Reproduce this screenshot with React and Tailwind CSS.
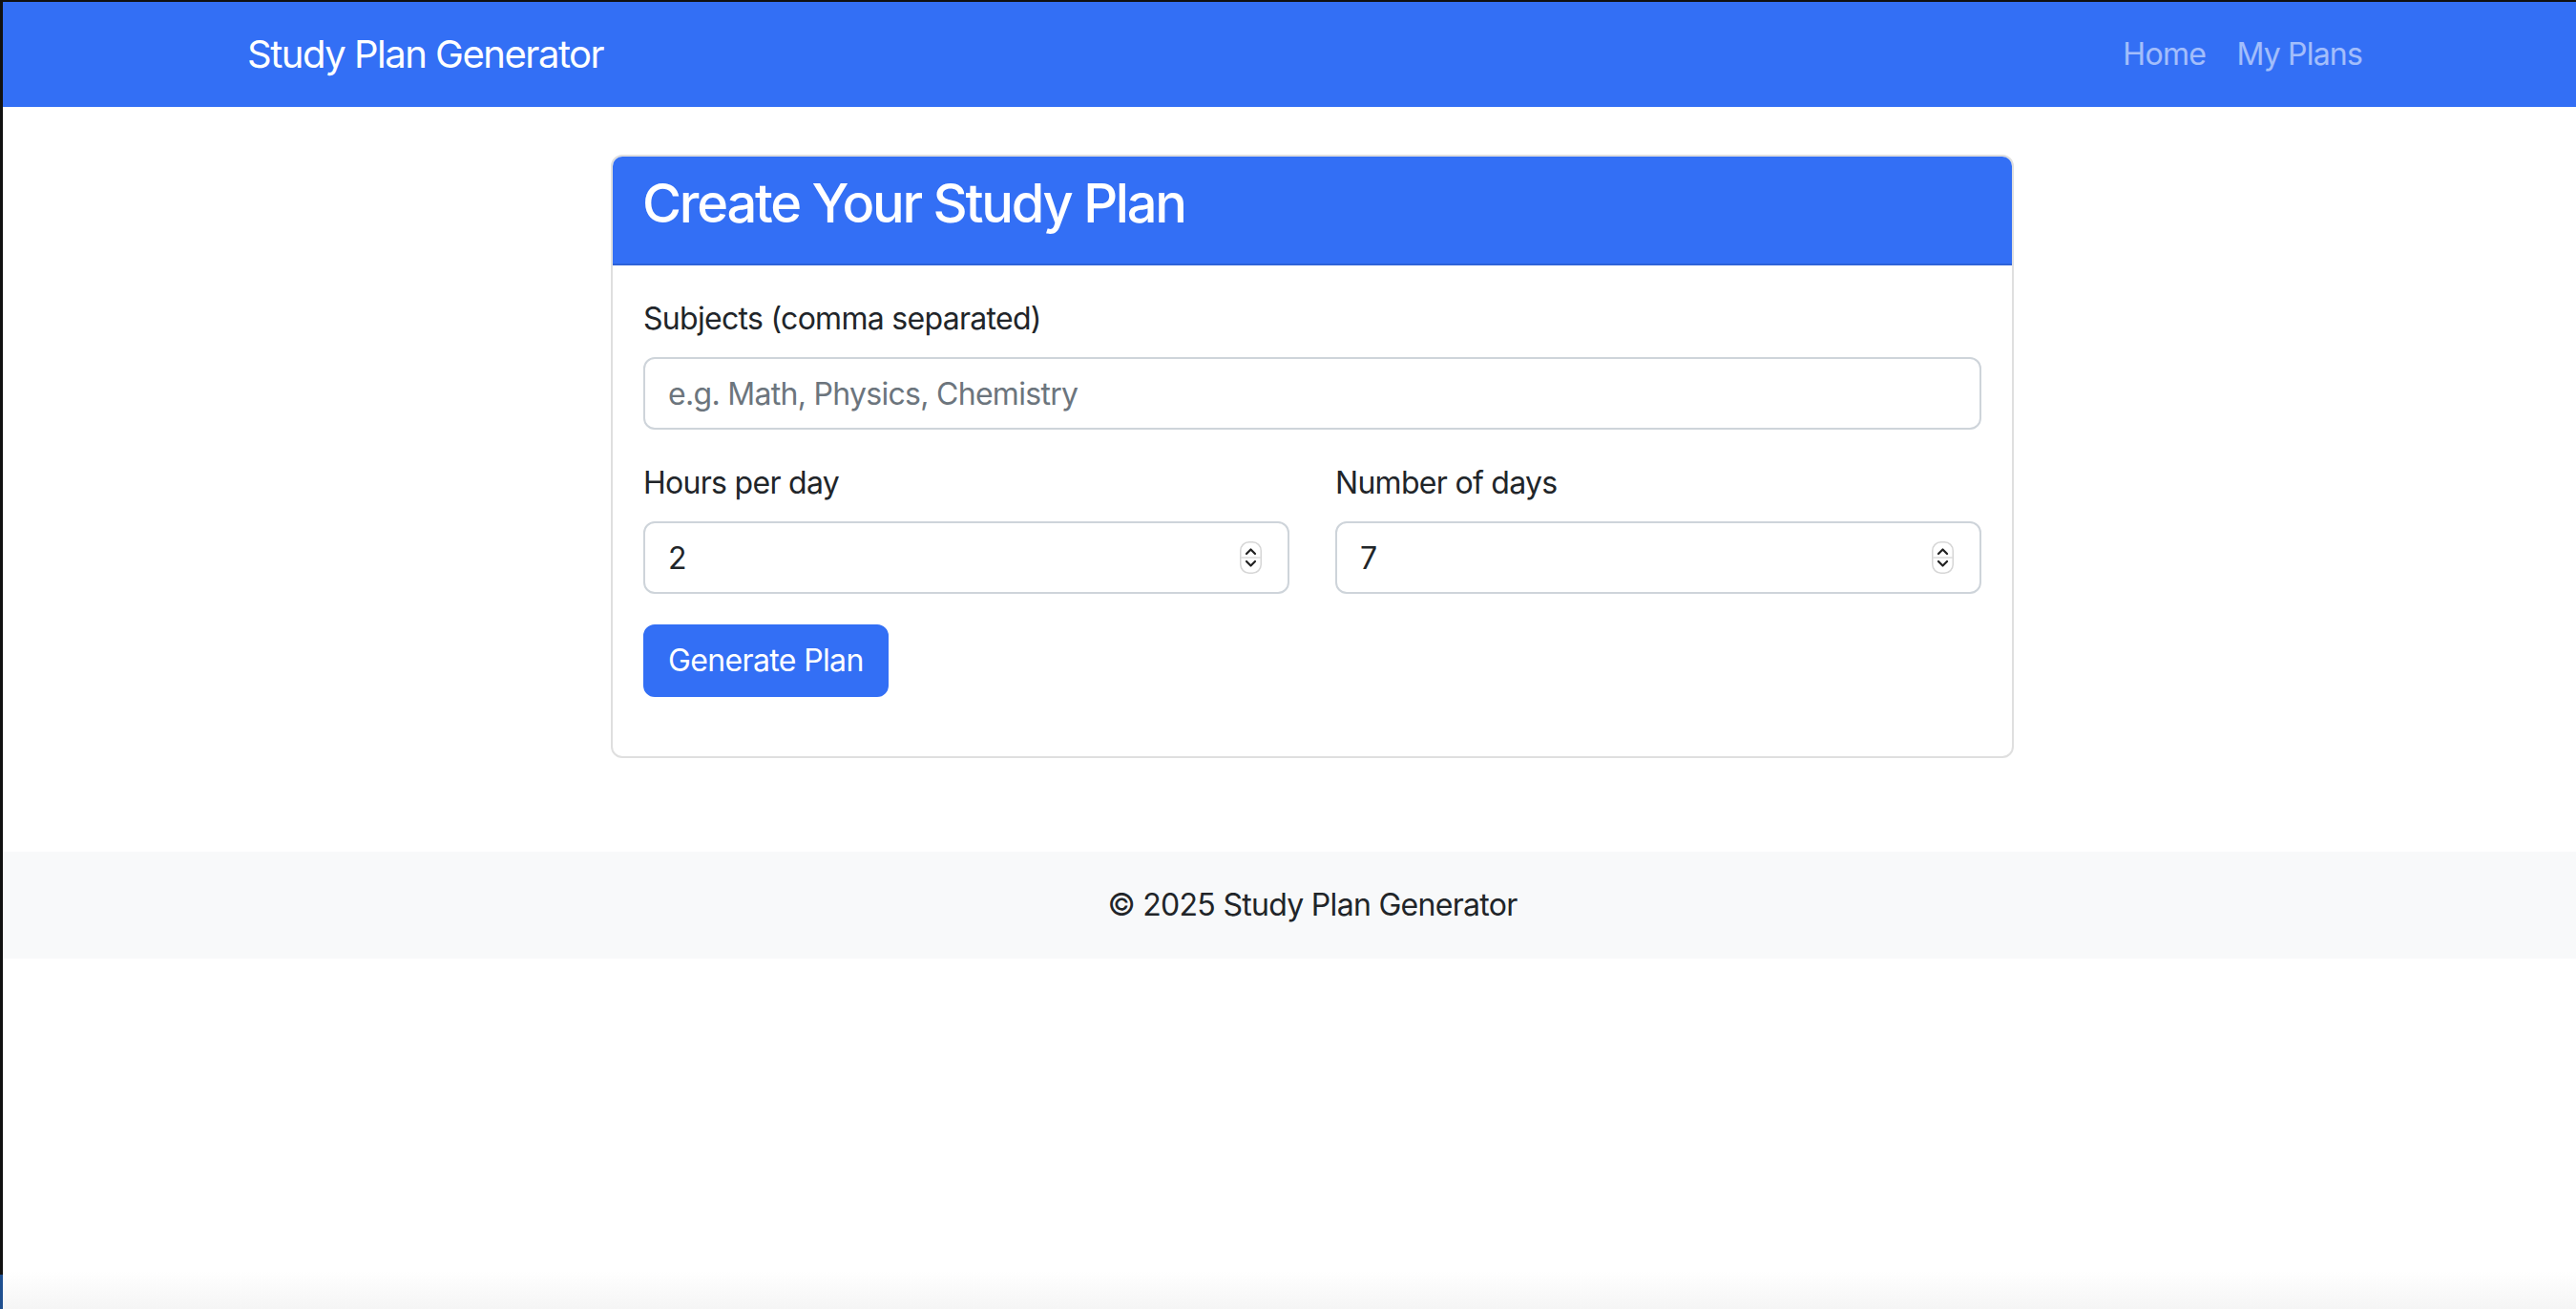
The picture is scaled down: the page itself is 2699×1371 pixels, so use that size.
import React from 'react';

const Spinner = () => (
    <svg
        width="23"
        height="34"
        viewBox="0 0 23 34"
        className="absolute right-[29px] top-1/2 -translate-y-1/2 pointer-events-none"
    >
        <rect x="0.75" y="0.75" width="21.5" height="32.5" rx="9" fill="#fff" stroke="#d6d6d6" strokeWidth="1.5" />
        <line x1="1" y1="17" x2="22" y2="17" stroke="#dcdcdc" strokeWidth="1.5" />
        <path d="M7 13 L11.5 8.5 L16 13" fill="none" stroke="#222" strokeWidth="2.2" strokeLinecap="round" strokeLinejoin="round" />
        <path d="M7 21 L11.5 25.5 L16 21" fill="none" stroke="#222" strokeWidth="2.2" strokeLinecap="round" strokeLinejoin="round" />
    </svg>
);

const NumberField = ({ id, label, value }) => (
    <div className="flex flex-col">
        <label htmlFor={id} className="text-[32px] leading-[48px] tracking-[-0.022em] mb-[16px]">{label}</label>
        <div className="relative">
            <input
                id={id}
                type="number"
                defaultValue={value}
                className="w-full h-[76px] px-[24px] text-[32px] text-[#212529] border-2 border-[#ced4da] rounded-[12px] outline-none [appearance:textfield] [&::-webkit-inner-spin-button]:appearance-none [&::-webkit-outer-spin-button]:appearance-none"
            />
            <Spinner />
        </div>
    </div>
);

const App = () => {
    return (
        <div className="min-h-screen w-full overflow-hidden bg-white flex font-[Inter,sans-serif] text-[#212529]">
            <div className="w-[3px] shrink-0 flex flex-col">
                <div className="flex-1 bg-[#111111]"></div>
                <div className="h-[36px] bg-[#1f4f8f]"></div>
            </div>

            <div className="w-[2744px] shrink-0 flex flex-col">
                <nav className="h-[112px] bg-[#336ff5] border-t-2 border-[#111111]">
                    <div className="w-[2280px] mx-auto px-[24px] h-full flex items-center justify-between">
                        <a href="#" className="text-[40px] leading-[60px] tracking-[-0.037em] text-white">Study Plan Generator</a>
                        <ul className="flex">
                            <li><a href="#" className="block px-[16px] text-[32px] leading-[48px] tracking-[-0.02em] text-white/55">Home</a></li>
                            <li><a href="#" className="block px-[16px] text-[32px] leading-[48px] tracking-[-0.025em] text-white/55">My Plans</a></li>
                        </ul>
                    </div>
                </nav>

                <main className="w-[2280px] mx-auto px-[24px] mt-[50px]">
                    <div className="w-[1470px] mx-auto bg-white border-2 border-[#dfdfdf] rounded-[12px] overflow-hidden">
                        <div className="h-[114px] bg-[#336ff5] border-b-2 border-[#2d62d8] px-[31px] pb-[14px] flex items-center">
                            <h2 className="text-[56px] leading-[68px] font-medium tracking-[-0.04em] text-white">Create Your Study Plan</h2>
                        </div>
                        <form className="px-[32px] pt-[32px] pb-[62px]" onSubmit={(e) => e.preventDefault()}>
                            <div className="flex flex-col mb-[32px]">
                                <label htmlFor="subjects" className="text-[32px] leading-[48px] tracking-[-0.022em] mb-[16px]">Subjects (comma separated)</label>
                                <input
                                    id="subjects"
                                    type="text"
                                    placeholder="e.g. Math, Physics, Chemistry"
                                    className="w-full h-[76px] px-[24px] text-[32px] tracking-[-0.022em] border-2 border-[#ced4da] rounded-[12px] outline-none placeholder:text-[#6c757d]"
                                />
                            </div>
                            <div className="grid grid-cols-2 gap-x-[48px] mb-[32px]">
                                <NumberField id="hours" label="Hours per day" value={2} />
                                <NumberField id="days" label="Number of days" value={7} />
                            </div>
                            <button
                                type="submit"
                                className="h-[76px] px-[24px] text-[32px] tracking-[-0.02em] text-white bg-[#336ff5] border-2 border-[#336ff5] rounded-[12px]"
                            >
                                Generate Plan
                            </button>
                        </form>
                    </div>
                </main>

                <footer className="mt-[98px] h-[112px] bg-[#f8f9fa] flex items-center justify-center">
                    <p className="text-[32px] leading-[48px] tracking-[-0.022em]">© 2025 Study Plan Generator</p>
                </footer>

                <div className="flex-1"></div>
                <div className="h-[40px] bg-gradient-to-b from-white to-[#f5f5f5]"></div>
            </div>
        </div>
    );
};

export default App;
